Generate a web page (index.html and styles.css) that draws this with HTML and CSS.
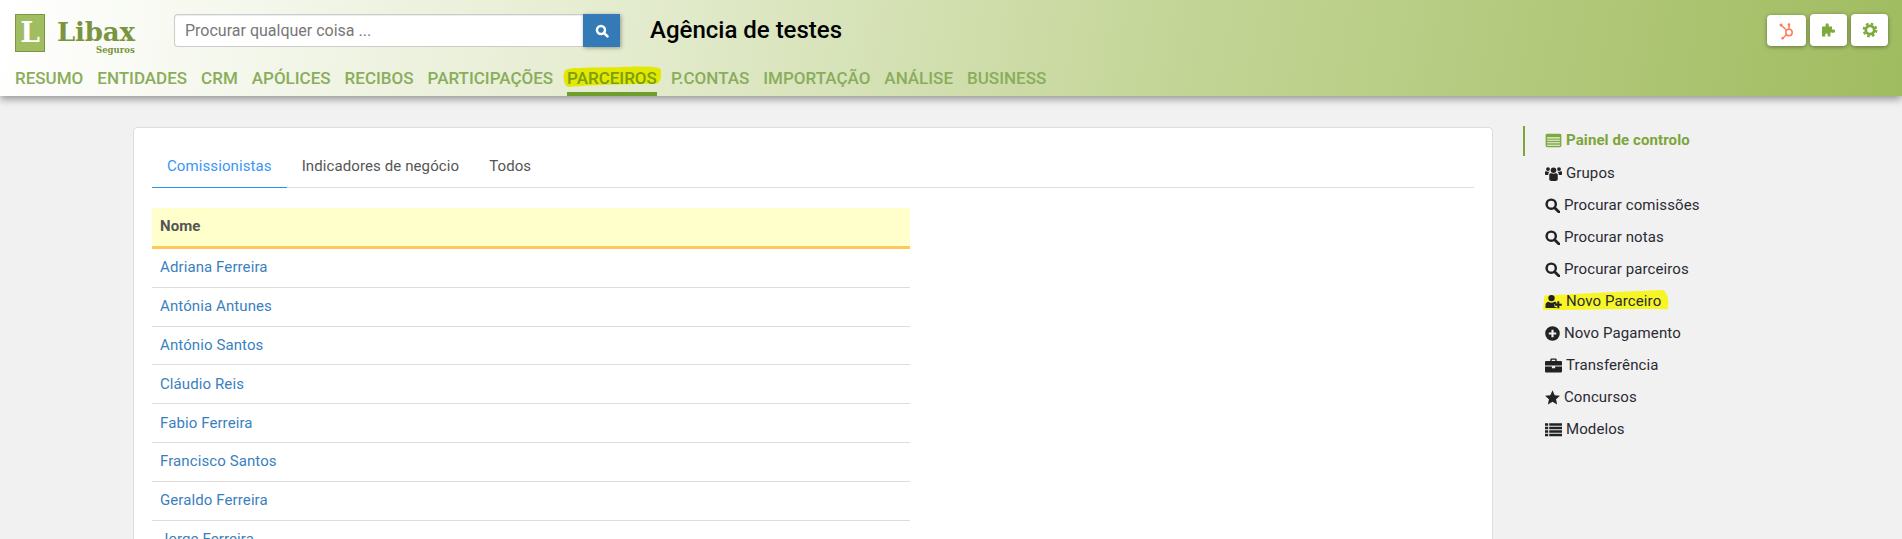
FILE: index.html

```html
<!DOCTYPE html>
<html lang="en">
<head>
    <meta charset="UTF-8">
    <meta name="viewport" content="width=device-width, initial-scale=1.0">
    <title>Libax Seguros</title>
    <link rel="stylesheet" href="styles.css">
</head>
<body>

<header class="topbar">
    <div class="topbar-row">
        <div class="logo">
            <div class="logo-square">L</div>
            <div class="logo-text">
                <span class="logo-name">Libax</span>
                <span class="logo-sub">Seguros</span>
            </div>
        </div>
        <form class="search">
            <input class="search-input" type="text" placeholder="Procurar qualquer coisa ...">
            <button class="search-button" type="button">
                <svg class="icon" viewBox="0 0 16 16"><circle cx="6.8" cy="6.8" r="4.6" fill="none" stroke="#fff" stroke-width="2.8"/><path d="M10.2 10.2 14.2 14.2" stroke="#fff" stroke-width="3" stroke-linecap="round"/></svg>
            </button>
        </form>
        <h1 class="agency">Agência de testes</h1>
        <div class="tools">
            <a class="tool tool-wide" href="#">
                <svg viewBox="0 0 18 18" width="18" height="18"><g fill="none" stroke="#ff7a59" stroke-width="1.5"><circle cx="11" cy="10.5" r="3.2"/><path d="M11 7V3M8.6 8.2 3.5 3.5M8.6 12.8 5 16"/></g><circle cx="11" cy="2.6" r="1.3" fill="#ff7a59"/><circle cx="3" cy="3" r="1.5" fill="#ff7a59"/><circle cx="4.6" cy="16.2" r="1.3" fill="#ff7a59"/></svg>
            </a>
            <a class="tool" href="#">
                <svg viewBox="0 0 16 16" width="16" height="16"><path fill="#7cab3c" d="M1 4.5h3.600V2.800a1.600 1.600 0 0 1 3.200 0v1.700H11v3h1.600a1.600 1.600 0 0 1 0 3.200H11v-.2H9.400v4H6.700v-1.900a1.200 1.200 0 0 0-2.400 0v1.900H1z"/></svg>
            </a>
            <a class="tool" href="#">
                <svg viewBox="0 0 16 16" width="16" height="16"><circle cx="8" cy="8" r="4.200" fill="none" stroke="#7cab3c" stroke-width="2.800"/><circle cx="8" cy="8" r="6.300" fill="none" stroke="#7cab3c" stroke-width="2.200" stroke-dasharray="2.600 2.350"/></svg>
            </a>
        </div>
    </div>
    <nav class="mainnav">
        <a href="#">RESUMO</a>
        <a href="#">ENTIDADES</a>
        <a href="#">CRM</a>
        <a href="#">APÓLICES</a>
        <a href="#">RECIBOS</a>
        <a href="#">PARTICIPAÇÕES</a>
        <a class="active" href="#">
            <svg class="marker" viewBox="0 0 100 24" preserveAspectRatio="none"><path d="M2 5C4 1 30 2 60 1 80 0 98 0 100 4 101 12 100 19 96 20 70 21 30 21 6 24 1 24-1 12 2 5Z"/></svg>
            <span>PARCEIROS</span>
        </a>
        <a href="#">P.CONTAS</a>
        <a href="#">IMPORTAÇÃO</a>
        <a href="#">ANÁLISE</a>
        <a href="#">BUSINESS</a>
    </nav>
</header>

<div class="page">
    <section class="card">
        <ul class="tabs">
            <li class="tab active">Comissionistas</li>
            <li class="tab">Indicadores de negócio</li>
            <li class="tab">Todos</li>
        </ul>
        <table class="people">
            <thead>
                <tr><th>Nome</th></tr>
            </thead>
            <tbody>
                <tr><td><a href="#">Adriana Ferreira</a></td></tr>
                <tr><td><a href="#">Antónia Antunes</a></td></tr>
                <tr><td><a href="#">António Santos</a></td></tr>
                <tr><td><a href="#">Cláudio Reis</a></td></tr>
                <tr><td><a href="#">Fabio Ferreira</a></td></tr>
                <tr><td><a href="#">Francisco Santos</a></td></tr>
                <tr><td><a href="#">Geraldo Ferreira</a></td></tr>
                <tr><td><a href="#">Jorge Ferreira</a></td></tr>
            </tbody>
        </table>
    </section>

    <aside class="sidemenu">
        <a class="side-item current" href="#">
            <svg class="icon side-icon-wide" viewBox="0 0 16 14"><rect x=".6" y=".6" width="14.800" height="12.800" rx="1.400" fill="#7cab3c"/><path d="M2 4h12v1H2zM2 6.300h12v1H2zM2 8.600h12v1H2zM2 10.900h12v1H2z" fill="#f1f1f1"/></svg>
            Painel de controlo
        </a>
        <a class="side-item" href="#">
            <svg class="icon side-icon-wide" viewBox="0 0 16 14"><circle cx="8" cy="4" r="2.600"/><circle cx="2.800" cy="2.800" r="1.800"/><circle cx="13.200" cy="2.800" r="1.800"/><path d="M4 8.400C4 7 5 6.600 6 6.800 7 7.400 9 7.400 10 6.800 11 6.600 12 7 12 8.400V12.200C12 13.500 11 14 10 14H6C5 14 4 13.500 4 12.200ZM0 5.500C0 4.800 1 4.800 2 5.200 2.800 5.500 3.500 5.400 4.400 5.200 3.500 6 3 7 3 8.500H1C0 8.500 0 8 0 7.200ZM16 5.500C16 4.800 15 4.800 14 5.200 13.200 5.500 12.500 5.400 11.600 5.200 12.500 6 13 7 13 8.500H15C16 8.500 16 8 16 7.200Z"/></svg>
            Grupos
        </a>
        <a class="side-item" href="#">
            <svg class="icon side-icon" viewBox="0 0 14 14"><circle cx="5.800" cy="5.800" r="4.300" fill="none" stroke="#222" stroke-width="2.300"/><path d="M9 9 13 13" stroke="#222" stroke-width="2.600" stroke-linecap="round"/></svg>
            Procurar comissões
        </a>
        <a class="side-item" href="#">
            <svg class="icon side-icon" viewBox="0 0 14 14"><circle cx="5.800" cy="5.800" r="4.300" fill="none" stroke="#222" stroke-width="2.300"/><path d="M9 9 13 13" stroke="#222" stroke-width="2.600" stroke-linecap="round"/></svg>
            Procurar notas
        </a>
        <a class="side-item" href="#">
            <svg class="icon side-icon" viewBox="0 0 14 14"><circle cx="5.800" cy="5.800" r="4.300" fill="none" stroke="#222" stroke-width="2.300"/><path d="M9 9 13 13" stroke="#222" stroke-width="2.600" stroke-linecap="round"/></svg>
            Procurar parceiros
        </a>
        <a class="side-item marked" href="#">
            <svg class="marker" viewBox="0 0 100 24" preserveAspectRatio="none"><path d="M1 7C20 5 60 2 95 0 100 3 100 18 99 23 70 22 30 24 0 24Z"/></svg>
            <svg class="icon side-icon-wide" viewBox="0 0 17 14"><circle cx="6.500" cy="3.600" r="3.200"/><path d="M.5 13.500V10.500C.5 8.500 2 7.200 3.500 7.200 5.500 8.500 7.500 8.500 9.500 7.200 10.500 7.200 11 7.600 11.500 8.200V9.500H9.500V12.500H11.500V13.500ZM12.300 6.800H14.300V9.200H16.800V11.200H14.300V13.800H12.300V11.200H10V9.200H12.300Z"/></svg>
            <span>Novo Parceiro</span>
        </a>
        <a class="side-item" href="#">
            <svg class="icon side-icon" viewBox="0 0 14 14"><path fill-rule="evenodd" d="M7 .2a6.800 6.800 0 1 0 0 13.600A6.800 6.800 0 0 0 7 .2ZM6 3.500H8V6H10.500V8H8V10.500H6V8H3.500V6H6Z"/></svg>
            Novo Pagamento
        </a>
        <a class="side-item" href="#">
            <svg class="icon side-icon-wide" viewBox="0 0 16 14"><path d="M5 2.800V1.500C5 .8 5.500.3 6.200.3H9.800C10.500.3 11 .8 11 1.500V2.800H14.800C15.500 2.800 16 3.300 16 4V7H0V4C0 3.300.5 2.800 1.200 2.800ZM6.300 2.800H9.700V1.600H6.300ZM0 8H6.500V9.500H9.500V8H16V12.500C16 13.200 15.500 13.700 14.800 13.700H1.200C.5 13.700 0 13.200 0 12.500Z"/></svg>
            Transferência
        </a>
        <a class="side-item" href="#">
            <svg class="icon side-icon" viewBox="0 0 14 14"><path d="M7 .3 9 4.800 14 5.300 10.300 8.600 11.300 13.500 7 11 2.700 13.500 3.700 8.600 0 5.300 5 4.800Z"/></svg>
            Concursos
        </a>
        <a class="side-item" href="#">
            <svg class="icon side-icon-wide" viewBox="0 0 16 14"><path d="M0 1H3V3.500H0ZM4 1H16V3.500H4ZM0 4.500H3V6.800H0ZM4 4.500H16V6.800H4ZM0 7.800H3V10H0ZM4 7.800H16V10H4ZM0 11H3V13.300H0ZM4 11H16V13.300H4Z"/></svg>
            Modelos
        </a>
    </aside>
</div>

</body>
</html>
```

FILE: styles.css

```css
html, body {
    height: 100%;
}
body {
    margin: 0;
    overflow: hidden;
    background-color: #f1f1f1;
    color: #333;
    font-family: Roboto, Arial, sans-serif;
    font-size: 15px;
    line-height: 20px;
}
a {
    color: inherit;
    text-decoration: none;
}

/* Top bar */
.topbar {
    position: relative;
    z-index: 2;
    height: 96px;
    box-sizing: border-box;
    padding: 14px 14px 0 15px;
    background: linear-gradient(100deg, #fff 0%, #e3ebcd 34%, #c3d596 62%, #a0bc60 100%);
    box-shadow: 0 3px 8px rgba(0, 0, 0, 0.4);
}
.topbar-row {
    display: flex;
    align-items: flex-start;
    height: 38px;
}
.logo {
    display: flex;
    width: 159px;
}
.logo-square {
    width: 28px;
    height: 36px;
    border: 1px solid #7b9644;
    background-color: #a0bd5f;
    color: #fff;
    font-family: "DejaVu Serif", serif;
    font-weight: bold;
    font-size: 28px;
    line-height: 35px;
    text-align: center;
}
.logo-text {
    display: flex;
    flex-direction: column;
    align-items: flex-end;
    margin-left: 12px;
    padding-top: 5px;
    color: #7a9440;
    font-family: "DejaVu Serif", serif;
    font-weight: bold;
}
.logo-name {
    font-size: 26px;
    line-height: 27px;
    letter-spacing: -0.2px;
}
.logo-sub {
    font-size: 8.500px;
    line-height: 9px;
}
.search {
    display: flex;
    width: 446px;
    height: 33px;
    margin: 0;
}
.search-input {
    flex: 1;
    min-width: 0;
    box-sizing: border-box;
    padding: 0 10px;
    border: 1px solid #ccc;
    border-right: none;
    border-radius: 4px 0 0 4px;
    outline: none;
    background: #fff;
    box-shadow: inset 0 1px 1px rgba(0, 0, 0, 0.08);
    font-family: Roboto, Arial, sans-serif;
    font-size: 16px;
}
.search-input::placeholder {
    color: #777;
    opacity: 1;
}
.search-button {
    width: 37px;
    padding: 0;
    border: none;
    background-color: #337ab7;
    box-shadow: 1px 1px 4px rgba(0, 0, 0, 0.35);
}
.icon {
    display: inline-block;
    fill: #222;
}
.search-button .icon {
    display: block;
    width: 14px;
    height: 14px;
    margin: 0 auto;
}
.agency {
    margin: 0 0 0 30px;
    color: #000;
    font-size: 24px;
    font-weight: 500;
    line-height: 33px;
}
.tools {
    display: flex;
    gap: 4px;
    margin-left: auto;
}
.tool {
    display: flex;
    align-items: center;
    justify-content: center;
    width: 37px;
    height: 32px;
    border-radius: 4px;
    background-color: #fff;
    box-shadow: 0 1px 4px rgba(0, 0, 0, 0.4);
}
.tool-wide {
    width: 39px;
    height: 31px;
    margin-top: 1px;
}
.mainnav {
    display: flex;
    gap: 14px;
    margin-top: 6px;
    height: 38px;
    color: #89ad5b;
    font-size: 17px;
    font-weight: 500;
}
.mainnav a {
    position: relative;
    box-sizing: border-box;
    height: 38px;
    line-height: 20px;
    padding-top: 10px;
}
.mainnav a.active {
    border-bottom: 4px solid #6f9e2e;
    color: #7b9e12;
}
.mainnav a.active span {
    position: relative;
}
.marker {
    position: absolute;
    fill: #e2e800;
}
.mainnav .marker {
    left: -4px;
    top: 8px;
    width: calc(100% + 8px);
    height: 21px;
}

/* Content */
.page {
    display: flex;
    align-items: flex-start;
    padding: 31px 0 0 133px;
}
.card {
    box-sizing: border-box;
    width: 1360px;
    height: 500px;
    padding: 18px 18px 0;
    border: 1px solid #ddd;
    border-radius: 4px;
    background-color: #fff;
    letter-spacing: 0.1px;
}
.tabs {
    display: flex;
    margin: 0 0 20px;
    padding: 0;
    border-bottom: 1px solid #ddd;
    list-style: none;
}
.tab {
    padding: 10px 15px 11px;
    color: #555;
}
.tab.active {
    margin-bottom: -1px;
    border-bottom: 1px solid #2196f3;
    color: #3a96f5;
}
.people {
    width: 758px;
    border-collapse: collapse;
}
.people th {
    height: 36px;
    padding: 0 8px 2px;
    border-bottom: 3px solid #ffc65c;
    background-color: #ffc;
    color: #555;
    font-weight: 700;
    text-align: left;
}
.people td {
    height: 36.800px;
    padding: 0 8px 1px;
    border-bottom: 1px solid #ddd;
    color: #3a7fc0;
}

/* Side menu */
.sidemenu {
    margin: -1px 0 0 30px;
    width: 230px;
    letter-spacing: 0.1px;
}
.side-item {
    position: relative;
    top: -1px;
    display: flex;
    align-items: center;
    gap: 4px;
    height: 32px;
    margin-left: 2px;
    padding-left: 20px;
    color: #2a2a33;
    white-space: nowrap;
}
.side-item.current {
    top: 0;
    box-sizing: border-box;
    height: 30px;
    margin-bottom: 2px;
    margin-left: 0;
    padding-bottom: 2px;
    border-left: 2px solid #7ca53a;
    color: #7ca53a;
    font-weight: 700;
}
.side-item.current .icon {
    fill: #7cab3c;
}
.side-icon {
    width: 15px;
    height: 15px;
}
.side-icon-wide {
    width: 17px;
    height: 15px;
}
.side-item.marked .marker {
    left: 18px;
    top: 5px;
    width: 126px;
    height: 20px;
    fill: #f6f626;
}
.side-item.marked .icon, .side-item.marked span {
    position: relative;
}
```
